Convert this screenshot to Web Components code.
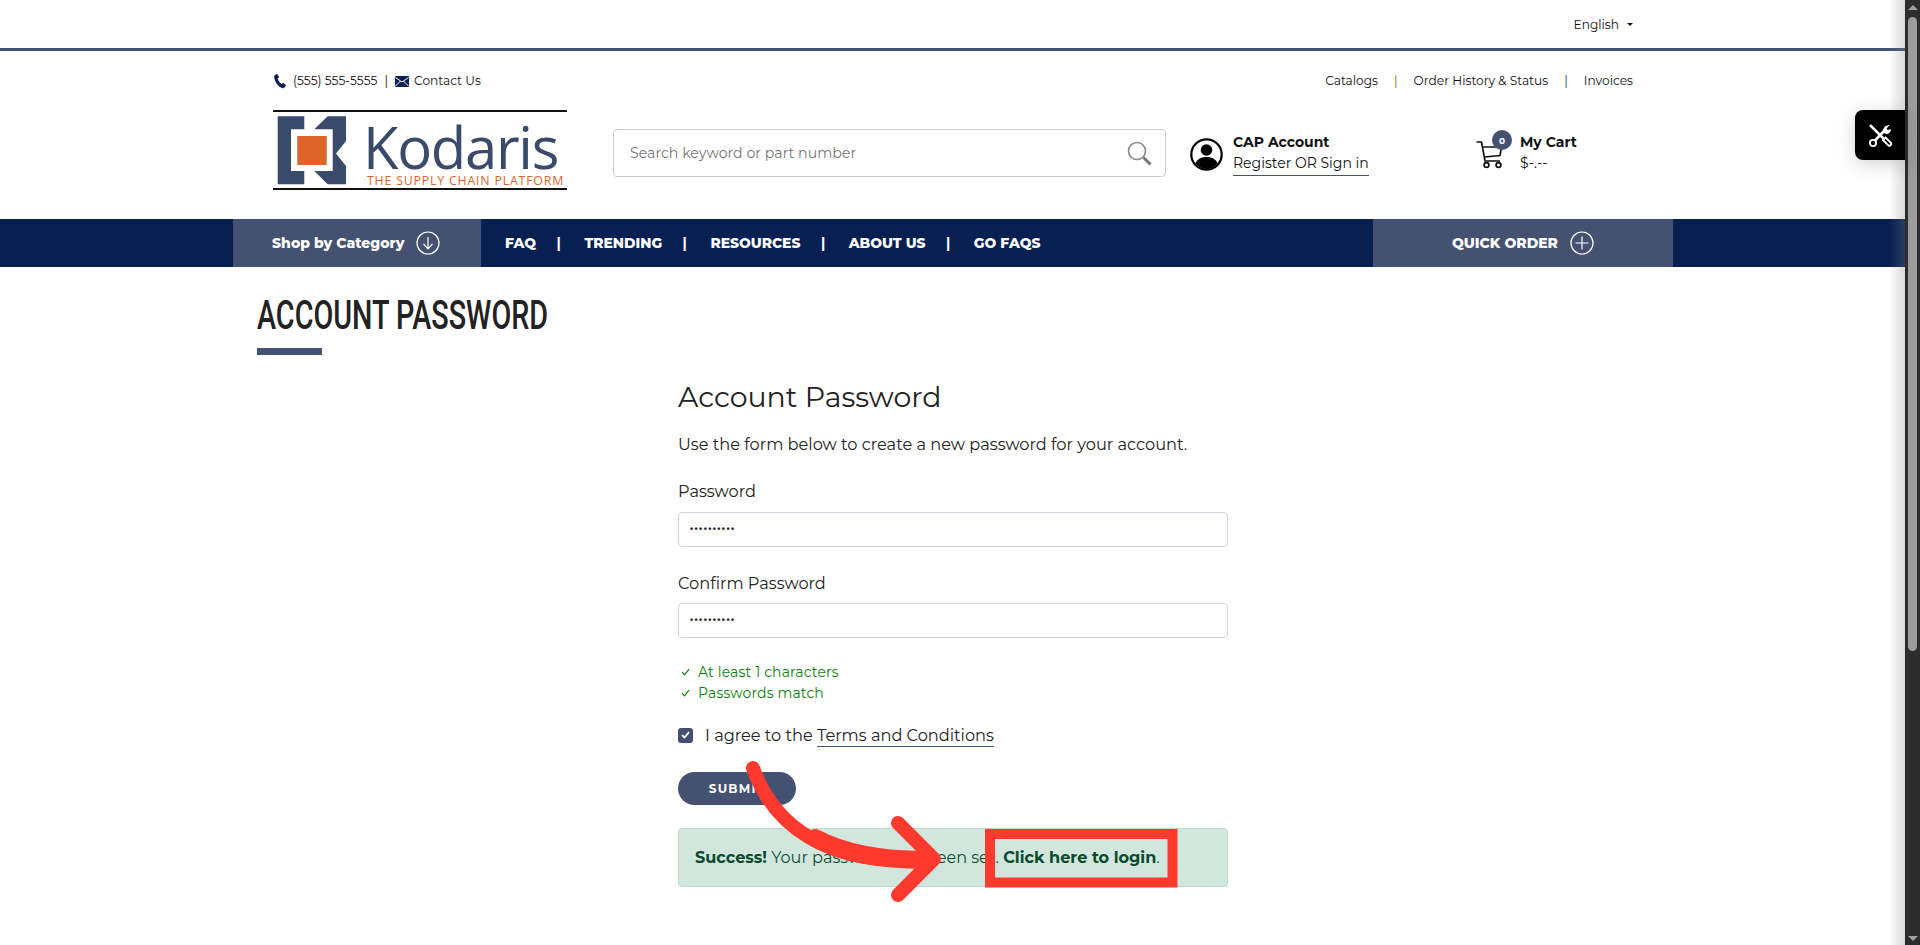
<!DOCTYPE html>
<html><head><meta charset="utf-8"><title>Account Password</title>
<style>
html,body{margin:0;padding:0;height:945px;overflow:hidden;background:#fff}
body{font-family:"Montserrat","Inter","Noto Sans",sans-serif;color:#111}
</style></head><body>
<kod-app></kod-app>
<template id="t-app"><style>
:host{display:flex;height:945px;width:1920px;overflow:hidden;position:relative}
.page{flex:1;min-width:0;position:relative}
.shade{position:absolute;right:0;top:0;bottom:0;width:16px;background:linear-gradient(90deg,rgba(128,128,128,0),rgba(128,128,128,.3));pointer-events:none}
.scroll{width:15px;background:#2c2c2c;display:flex;flex-direction:column;align-items:center;flex:none}
.thumb{width:9px;background:#9c9c9c;border-radius:5px;height:634px;margin-top:7px}
.up{margin-top:5px;width:0;height:0;border:5px solid transparent;border-top:0;border-bottom:5px solid #a0a0a0}
.down{margin-top:auto;margin-bottom:4px;width:0;height:0;border:5px solid transparent;border-bottom:0;border-top:5px solid #a0a0a0}
</style>
<div class="page"><kod-header></kod-header><kod-nav></kod-nav><kod-main></kod-main><div class="shade"></div><kod-tools></kod-tools><kod-annot></kod-annot></div>
<div class="scroll"><div class="up"></div><div class="thumb"></div><div class="down"></div></div></template>

<template id="t-header"><style>
:host{display:block;font-size:12.2px;color:#111}
.lang{height:48px;border-bottom:3px solid #455170;display:flex;justify-content:flex-end;align-items:center;padding-right:272px;font-size:12.200px}
.caret{display:inline-block;border:3px solid transparent;border-top:3px solid #111;border-bottom:0;margin-left:8px}
.wrap{padding:0 272px 0 273px;height:168px}
.top{display:flex;justify-content:space-between;align-items:center;padding-top:19px;height:20px;font-size:12.200px}
.left,.right{display:flex;align-items:center}
.right i{font-style:normal;margin:0 16px;color:#8a6d00}
.row{display:flex;align-items:flex-start;margin-top:20px}
.logo{width:294px;height:80px;border-top:2px solid #111;border-bottom:2px solid #111;box-sizing:border-box;flex:none;display:flex}
.search{margin:19px 0 0 46px;width:553px;height:48px;border:1px solid #ccc;border-radius:4px;box-sizing:border-box;display:flex;align-items:center;justify-content:space-between;padding:0 13px 0 16px;color:#777;font-size:14.200px;flex:none}
.acct{margin:22px 0 0 24px;display:flex;align-items:center;gap:10px;width:285px;flex:none;box-sizing:border-box}
.cart{margin-top:22px;display:flex;align-items:center;gap:15px;position:relative}
.t{font-weight:700;font-size:14px;line-height:21px}
.l{font-size:14px;line-height:21px}
.ul{border-bottom:1px solid #455170;padding-bottom:1px}
.badge{position:absolute;left:17px;top:-2px;width:20px;height:20px;border-radius:50%;background:#455170;color:#fff;font-size:9px;font-weight:700;display:flex;align-items:center;justify-content:center}
</style>
<div class="lang"><span>English</span><span class="caret"></span></div>
<div class="wrap">
<div class="top"><div class="left">
<svg width="16" height="16" viewBox="0 0 14 15" style="margin:1px 4px 0 0"><path d="M1 2.200 3.300.6l2 3.200L3.800 5.200c.5 2 1.800 3.800 3.700 5l1.600-1.100 2.700 2.700-1.800 2.100c-.8.500-1.900.4-3-.2C3.600 11.700.900 7.600.600 3.700c0-.6.100-1.100.4-1.500z" fill="#0b1f52"/></svg>
<span>(555) 555-5555</span><span style="margin:0 7px;color:#111">|</span>
<svg width="14" height="11" viewBox="0 0 14 11" style="margin:2px 5px 0 0"><rect width="14" height="11" rx="1" fill="#0b1f52"/><path d="M.5 1.500 7 6l6.500-4.500M.5 10l5-5M13.500 10l-5-5" stroke="#fff" fill="none"/></svg>
<span>Contact Us</span></div>
<div class="right"><span>Catalogs</span><i>|</i><span>Order History &amp; Status</span><i style="color:#233">|</i><span>Invoices</span></div></div>
<div class="row">
<div class="logo"><svg width="90" height="76" viewBox="0 0 90 78" style="flex:none;margin-top:-1px;height:78px"><path d="M4.700 5.300H31.300V18.300H18V60H31.300V73.300H4.700z" fill="#3a4a6b"/><path d="M41.300 18.300 54.700 5.300H73V30L63 42.500 73 55V73.300H54.700L41.300 60H59.700V18.300z" fill="#3a4a6b"/><rect x="24.300" y="25" width="29.400" height="29" fill="#dc6429"/></svg>
<div style="display:flex;flex-direction:column;color:#3a4a6b;white-space:nowrap"><span style="font:500 58px/50px 'Open Sans',sans-serif;letter-spacing:-1.300px;margin-top:10px;height:50px;margin-left:0">Kodaris</span><span style="font:500 12.400px/12px 'Open Sans',sans-serif;letter-spacing:.78px;color:#dc6429;margin:3px 0 0 4px">THE SUPPLY CHAIN PLATFORM</span></div></div>
<div class="search"><span>Search keyword or part number</span><svg width="25" height="25" viewBox="0 0 25 25" fill="none" stroke="#888" stroke-width="1.600"><circle cx="10" cy="10" r="8.500"/><path d="M16.500 16.500 23.500 23.500" stroke-width="3" stroke="#777"/></svg></div>
<div class="acct"><svg width="33" height="33" viewBox="0 0 33 33" style="flex:none"><circle cx="16.500" cy="16.500" r="15.200" fill="#fff" stroke="#000" stroke-width="2.200"/><circle cx="16.500" cy="12" r="5.800"/><path d="M5.500 25.500c1.500-4.500 6-6.500 11-6.500s9.500 2 11 6.500c-3 3.500-6.800 5.500-11 5.500s-8-2-11-5.500z"/></svg>
<div style="white-space:nowrap"><div class="t">CAP Account</div><div class="l ul">Register OR Sign in</div></div></div>
<div class="cart"><svg width="30" height="30" viewBox="0 0 29 30" fill="none" stroke="#111" stroke-width="1.700"><path d="M1 3h5l3.500 19h15"/><path d="M7 8h19l-1.500 8.500L9 18"/><circle cx="11" cy="26" r="2.400"/><circle cx="23" cy="26" r="2.400"/></svg>
<span class="badge">0</span>
<div style="white-space:nowrap"><div class="t">My Cart</div><div class="l" style="padding-bottom:2px">$-.--</div></div></div>
</div></div></template>

<template id="t-nav"><style>
:host{display:flex;height:48px;background:#081f52;color:#fff;padding-left:233px;box-sizing:border-box;font-weight:800;font-size:13.900px}
.shop{width:248px;background:#455170;display:flex;align-items:center;gap:12px;padding-left:39px;box-sizing:border-box;font-weight:800;font-size:14px;flex:none}
.items{display:flex;align-items:center;flex:1;padding-left:24px}
.items i{font-style:normal;margin:0 23.500px 0 20.500px;font-weight:700}
.quick{width:300px;background:#455170;margin-right:232px;display:flex;align-items:center;justify-content:center;gap:12px;flex:none;box-sizing:border-box;font-size:14px}
</style>
<div class="shop"><span>Shop by Category</span><svg width="24" height="24" viewBox="0 0 24 24" fill="none" stroke="#fff" stroke-width="1.200"><circle cx="12" cy="12" r="11"/><path d="M12 6v11.500M7.500 13l4.500 4.800 4.500-4.800"/></svg></div>
<div class="items"><span>FAQ</span><i>|</i><span>TRENDING</span><i>|</i><span>RESOURCES</span><i>|</i><span>ABOUT US</span><i>|</i><span>GO FAQS</span></div>
<div class="quick"><span>QUICK ORDER</span><svg width="24" height="24" viewBox="0 0 24 24" fill="none" stroke="#fff" stroke-width="1.200"><circle cx="12" cy="12" r="11"/><path d="M12 5.500v13M5.500 12h13"/></svg></div></template>

<template id="t-main"><style>
:host{display:block;padding-left:257px;height:678px;color:#222}
h1{margin:0;padding-top:25px;font:500 40.500px/46px "Roboto",sans-serif;color:#222;height:46px;white-space:nowrap;transform:scaleX(.71);transform-origin:0 0}
.bar{width:65px;height:7px;background:#455170;margin-top:10px}
.form{margin-left:421px;width:550px;padding-top:22px;font-size:16.200px}
h2{margin:0;font-weight:400;font-size:28.400px;line-height:40px;color:#222}
p{margin:15px 0 0;line-height:24px}
label{display:block;line-height:22px}
.i{height:35px;border:1px solid #cfd3dc;border-radius:4px;box-sizing:border-box;display:flex;align-items:center;padding-left:11px;margin-top:9px;color:#222}
.dots{font:bold 9px/1 "Liberation Sans",sans-serif;letter-spacing:1.400px}
.rules{margin-top:23.500px;color:#0e800e;font-size:14px;letter-spacing:.15px;line-height:21px}
.rules div{display:flex;align-items:center;gap:8px;padding-left:3px}
.agree{display:flex;align-items:center;margin-top:17.500px;gap:12px;height:28px}
.cb{width:15px;height:15px;border-radius:3px;background:#455170;display:flex;align-items:center;justify-content:center;flex:none}
u{text-decoration:none;border-bottom:1px solid #455170;padding-bottom:1px}
.btn{margin-top:22.500px;width:118px;height:33px;border-radius:17px;background:#455170;color:#fff;font-size:12px;font-weight:700;letter-spacing:1.200px;display:flex;align-items:center;justify-content:center;box-sizing:border-box}
.alert{margin-top:23px;height:59px;background:#d1e7dd;border:1px solid #badbcc;border-radius:4px;box-sizing:border-box;display:flex;align-items:center;padding-left:16px;color:#0f5132;font-size:16.100px}
b{font-weight:700;color:#0b4a2e}
</style>
<h1>ACCOUNT PASSWORD</h1><div class="bar"></div>
<div class="form"><h2>Account Password</h2><p>Use the form below to create a new password for your account.</p>
<label style="margin-top:24px">Password</label><div class="i" style="margin-top:10px"><span class="dots">••••••••••</span></div>
<label style="margin-top:25px">Confirm Password</label><div class="i"><span class="dots">••••••••••</span></div>
<div class="rules"><div><svg width="9" height="8" viewBox="0 0 9 8" fill="none" stroke="#0e800e" stroke-width="1.200"><path d="M1 4.200 3.500 6.800 8 1.200"/></svg><span>At least 1 characters</span></div><div><svg width="9" height="8" viewBox="0 0 9 8" fill="none" stroke="#0e800e" stroke-width="1.200"><path d="M1 4.200 3.500 6.800 8 1.200"/></svg><span>Passwords match</span></div></div>
<div class="agree"><span class="cb"><svg width="9" height="8" viewBox="0 0 9 8" fill="none" stroke="#fff" stroke-width="1.800"><path d="M1 4.200 3.500 6.500 8 1.200"/></svg></span><span>I agree to the <u>Terms and Conditions</u></span></div>
<div class="btn">SUBMIT</div>
<div class="alert"><span><b>Success!</b> Your password has been set. <b>Click here to login</b>.</span></div>
</div></template>

<template id="t-tools"><style>
:host{position:absolute;right:0;top:110px;width:50px;height:50px;background:#000;border-radius:8px 0 0 8px;box-shadow:0 4px 18px rgba(0,0,0,.18);display:flex;align-items:center;justify-content:center}
</style><svg width="25" height="25" viewBox="0 0 24 24" fill="none" stroke="#fff"><path d="M2 2 20 20" stroke-width="2.600"/><path d="M14.500 16.500l2.500-2.500 5 5a1.800 1.800 0 0 1-2.500 2.500z" fill="#000" stroke-width="1.800"/><path d="M6.500 17 16 7" stroke-width="2.600"/><path d="M15 9c-1.200-3.500 1-7 6-7l-3 3 .8 1.800L22 6c0 4-3.500 6-7 3z" fill="#fff" stroke="none"/><circle cx="4.800" cy="19.200" r="3" fill="#000" stroke-width="1.800"/></svg></template>

<template id="t-annot"><style>
:host{position:absolute;left:0;top:0;width:1905px;height:945px;pointer-events:none}
svg{position:absolute;left:0;top:0}
</style><svg width="1905" height="945" viewBox="0 0 1905 945" fill="none" stroke="#fe3a2e"><rect x="990" y="834" width="182.500" height="48.500" stroke-width="10"/><path d="M753 768C775 830 830 860 905 860" stroke-width="14" stroke-linecap="round"/><path d="M815 838C845 854 880 860 925 860" stroke-width="18" stroke-linecap="round"/><path d="M898 823 934 859 898 895" stroke-width="14" stroke-linecap="round" stroke-linejoin="round"/></svg></template>

<script>
const def=(tag,id)=>customElements.define(tag,class extends HTMLElement{constructor(){super();this.attachShadow({mode:'open'}).appendChild(document.getElementById(id).content.cloneNode(true));}});
def('kod-tools','t-tools');def('kod-annot','t-annot');def('kod-header','t-header');def('kod-nav','t-nav');def('kod-main','t-main');def('kod-app','t-app');
</script>
</body></html>
